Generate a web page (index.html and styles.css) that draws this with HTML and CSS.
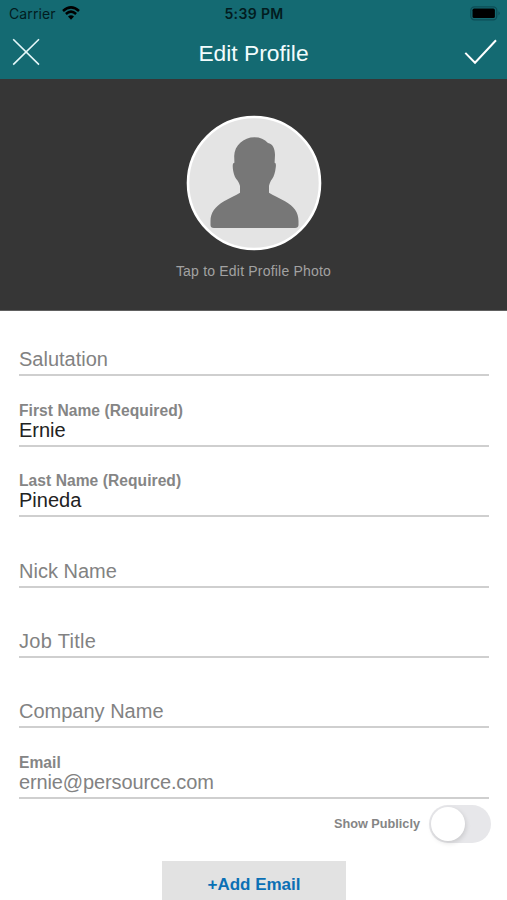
FILE: index.html
```
<!DOCTYPE html>
<html lang="en">
<head>
<meta charset="utf-8">
<title>Edit Profile</title>
<link rel="stylesheet" href="styles.css">
</head>
<body>
<div class="screen">
  <header class="header">
    <div class="status">
      <div class="carrier"><span>Carrier</span>
        <svg class="wifi" width="18" height="14" viewBox="0 0 18 14"><path d="M1 5Q9-2.200 17 5M3.900 8Q9 3.200 14.100 8" fill="none" stroke="#000" stroke-width="2.500"/><path d="M6 10.600Q9 7.800 12 10.600L9 13.800Z"/></svg>
      </div>
      <span class="time">5:39 PM</span>
      <svg class="battery" width="31" height="15" viewBox="0 0 31 15"><rect x=".8" y=".8" width="26" height="13" rx="3.6" fill="none" stroke="#0d4d56" stroke-width="1.2"/><rect x="2.5" y="2.6" width="22.4" height="9.4" rx="1.6"/><path d="M28.5 5.2Q31 7.2 28.5 9.4Z" fill="#0d4d56"/></svg>
    </div>
    <div class="navbar">
      <svg width="28" height="28" viewBox="0 0 28 28"><path d="M1.2 1.2L27 26.6M27 1.2L1.2 26.6" stroke="#e6f8fa" stroke-width="1.6"/></svg>
      <h1 class="title">Edit Profile</h1>
      <svg width="33" height="26" viewBox="0 0 33 26"><path d="M1.3 13.9L11 23.7L32 1.2" fill="none" stroke="#fff" stroke-width="2"/></svg>
    </div>
  </header>
  <section class="photo">
    <svg class="avatar" width="136" height="136" viewBox="0 0 136 136"><circle cx="68" cy="68" r="66" fill="#e4e4e4" stroke="#fff" stroke-width="2.6"/><path d="M68.500 22.300C74 22.300 78.500 24.200 82 28C86.500 28.500 89 33.500 89 40L88.600 47.800C90.500 48 90 51.500 89.200 56C88.300 60.500 86.800 63.500 85 65.500C84 67.500 83.500 69 83 71V77.700C87 80.500 93.500 83 99 86.300C108 91.500 112.500 97.500 112.500 106V110C112.500 112 111 113 109 113H28C25.500 113 24.500 112 24.500 110V106C24.500 98 29 91.500 38 86.300C43.500 83 50 80.500 54 77.700V71C53.500 69 52.500 67 51.500 65.500C49.500 63.500 48 60.500 47.200 56C46.500 51.500 46.300 48 48.400 47.800L48.200 41C48.500 30.500 57.500 22.300 68.500 22.300Z" fill="#777"/></svg>
    <div class="hint">Tap to Edit Profile Photo</div>
  </section>
  <main class="form">
    <div class="field"><div class="value muted">Salutation</div></div>
    <div class="field"><div class="label">First Name (Required)</div><div class="value">Ernie</div></div>
    <div class="field"><div class="label">Last Name (Required)</div><div class="value">Pineda</div></div>
    <div class="field"><div class="value muted">Nick Name</div></div>
    <div class="field"><div class="value muted title-case">Job Title</div></div>
    <div class="field"><div class="value muted">Company Name</div></div>
    <div class="field"><div class="label">Email</div><div class="value muted email">ernie@persource.com</div></div>
    <div class="public"><span>Show Publicly</span><div class="toggle"><div class="knob"></div></div></div>
    <div class="add">+Add Email</div>
  </main>
</div>
</body>
</html>
```

FILE: styles.css
```
* { box-sizing: border-box; }
body { margin: 0; font-family: "Liberation Sans", Arial, sans-serif; background: #fff; }
.screen { height: 900px; overflow: hidden; }
.header { height: 79px; background: #146a72; }
.status { height: 28px; padding: 0 7px 0 9px; display: grid; grid-template-columns: 1fr auto 1fr; align-items: center; color: #021c20; }
.carrier { display: flex; gap: 6px; align-items: center; font-family: Inter, sans-serif; font-size: 14px; letter-spacing: .1px; line-height: 28px; }
.wifi { margin-top: -2px; }
.time { font-family: Inter, sans-serif; font-size: 14px; font-weight: 600; letter-spacing: .35px; line-height: 28px; margin-left: -1px; }
.battery { justify-self: end; margin-right: -1px; margin-top: -2px; }
.navbar { height: 48px; display: grid; grid-template-columns: 1fr auto 1fr; align-items: center; padding: 0 10px 0 12px; }
.navbar svg:last-child { justify-self: end; }
.title { margin: 1px 2px 0 0; font-size: 22.8px; font-weight: 400; line-height: 28px; color: #f2fcfd; }
.photo { height: 232px; padding-top: 36px; display: flex; flex-direction: column; align-items: center; background: #363636; border-bottom: 1px solid #606060; }
.hint { margin-top: 12px; font-size: 14px; letter-spacing: .2px; line-height: 17px; color: #a2a2a2; }
.form { display: flex; flex-direction: column; margin-top: -5px; padding: 0 18px 0 19px; }
.field { height: 70.4px; display: flex; flex-direction: column; justify-content: flex-end; padding-bottom: 4px; border-bottom: 2px solid #cfcfcf; }
.label { font-size: 15.6px; letter-spacing: .05px; font-weight: 700; line-height: 18px; color: #858585; margin-bottom: -1px; }
.value { font-size: 20px; line-height: 22px; color: #222; }
.muted { color: #828282; }
.title-case { letter-spacing: .3px; }
.email { letter-spacing: -.12px; }
.public { height: 50px; display: flex; align-items: center; justify-content: flex-end; gap: 9px; margin-right: -2px; font-size: 12.7px; font-weight: 700; color: #858585; }
.toggle { width: 62px; height: 38px; border-radius: 19px; padding: 2px; background: #e7e7ea; }
.knob { width: 34px; height: 34px; border-radius: 50%; background: #fff; box-shadow: 1px 2px 5px #0002; }
.add { width: 184px; height: 60px; margin: 12px 0 0 143px; background: #e2e2e2; text-align: center; font-size: 17px; font-weight: 700; line-height: 48px; color: #0b70b5; }
```
